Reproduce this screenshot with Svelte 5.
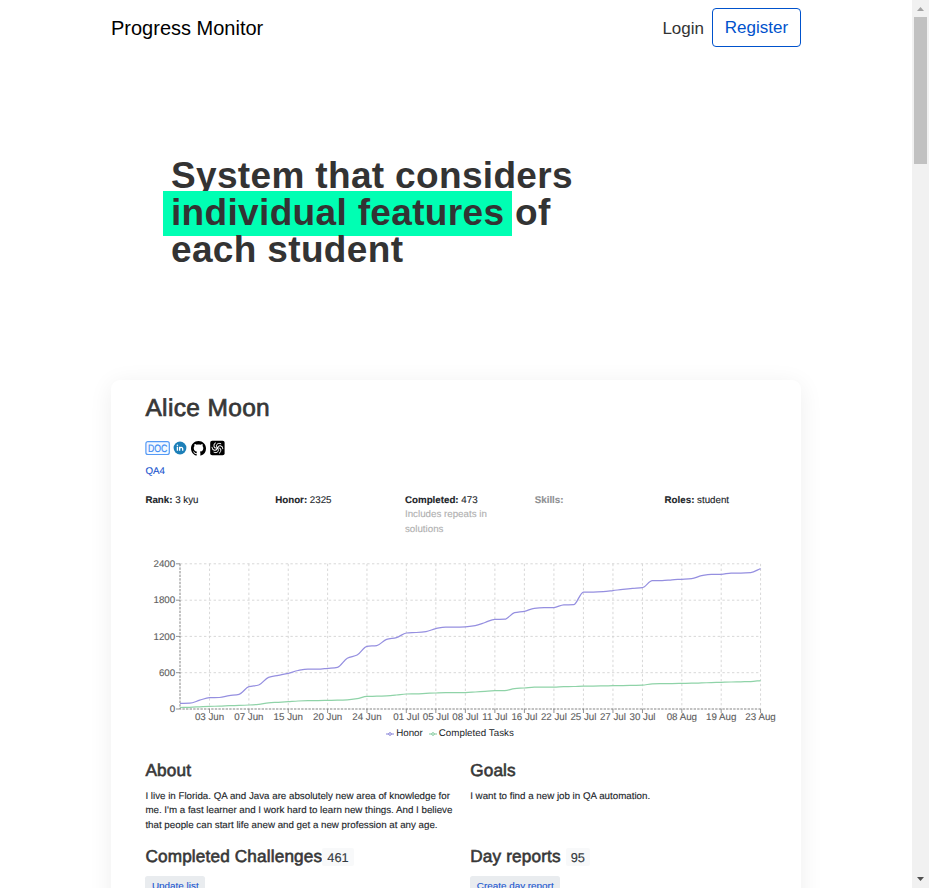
<script>
  const stats = [
    { label: 'Rank:', value: '3 kyu' },
    { label: 'Honor:', value: '2325' },
    { label: 'Completed:', value: '473', note: ['Includes repeats in', 'solutions'] },
    { label: 'Skills:', value: '', muted: true },
    { label: 'Roles:', value: 'student' }
  ];

  const x0 = 180;
  const step = 9.84;
  const yTicks = [
    [2400, 563.8], [1800, 600.2], [1200, 636.4], [600, 672.7], [0, 709]
  ];
  const xTicks = [
    [3, '03 Jun'], [7, '07 Jun'], [11, '15 Jun'], [15, '20 Jun'], [19, '24 Jun'],
    [23, '01 Jul'], [26, '05 Jul'], [29, '08 Jul'], [32, '11 Jul'], [35, '16 Jul'],
    [38, '22 Jul'], [41, '25 Jul'], [44, '27 Jul'], [47, '30 Jul'], [51, '08 Aug'],
    [55, '19 Aug'], [59, '23 Aug']
  ];
  const honor = [
    703.4, 703.2, 700.2, 697.6, 697.5, 695.7, 694.3, 686.7, 685, 677.3,
    675.3, 673.3, 670.5, 669.2, 669.2, 668.3, 667.3, 658.3, 655, 646.3,
    645.6, 639.3, 637.6, 633, 632.5, 631.6, 628.6, 627, 627, 626.8,
    625.6, 622.5, 619.3, 619.2, 612.7, 611.3, 608.3, 607.7, 607.6, 604.8,
    604.7, 592, 592, 591.7, 590.6, 589.3, 588.3, 587.6, 580.6, 580.6,
    579.8, 579.3, 578.7, 575.7, 574.3, 574.3, 573, 573, 572.6, 568.6
  ];
  const tasks = [
    707.5, 707.3, 706.8, 706.3, 706.2, 705.7, 705.4, 705, 704.3, 702.8,
    702.3, 701.7, 701, 700.7, 700.6, 700.4, 700.2, 699.8, 698.6, 696.4,
    696.2, 695.8, 695, 694, 693.8, 693.4, 693, 692.7, 692.6, 692.6,
    692, 691.3, 690.7, 690.6, 688.6, 688, 687, 687, 687, 686.6,
    686.5, 686, 686, 685.9, 685.7, 685.6, 685.4, 685.2, 683.8, 683.7,
    683.6, 683.4, 683.2, 682.9, 682.6, 682.3, 682, 681.8, 681.6, 680.6
  ];

  // Monotone cubic interpolation through evenly spaced points.
  function curve(ys) {
    const n = ys.length;
    const d = ys.slice(1).map((y, i) => y - ys[i]);
    const m = ys.map((_, i) => {
      if (i === 0) return d[0];
      if (i === n - 1) return d[n - 2];
      const a = d[i - 1];
      const b = d[i];
      if (a * b <= 0) return 0;
      return (2 * a * b) / (a + b);
    });
    let path = `M${x0},${ys[0]}`;
    for (let i = 0; i < n - 1; i++) {
      const x = x0 + i * step;
      path += `C${(x + step / 3).toFixed(2)},${(ys[i] + m[i] / 3).toFixed(2)} ${(x + (2 * step) / 3).toFixed(2)},${(ys[i + 1] - m[i + 1] / 3).toFixed(2)} ${(x + step).toFixed(2)},${ys[i + 1]}`;
    }
    return path;
  }
</script>

<div class="window">
  <div class="page">
    <header>
      <span class="brand">Progress Monitor</span>
      <nav>
        <span class="login">Login</span>
        <button class="register">Register</button>
      </nav>
    </header>

    <h1>System that considers<br /><span class="mark">individual features</span> of<br />each student</h1>

    <main class="card">
      <h2 class="name">Alice Moon</h2>
      <div class="icons">
        <svg width="25" height="16" viewBox="0 0 25 16">
          <rect x="0.9" y="1.7" width="23.4" height="12.8" rx="2" fill="#f4f9ff" stroke="#559af5" stroke-width="1.2" />
          <text x="3" y="12" font-size="10.6" textLength="19.4" lengthAdjust="spacingAndGlyphs" fill="#3f8df4" stroke="#3f8df4" stroke-width="0.2">DOC</text>
        </svg>
        <svg class="in" width="14" height="16" viewBox="0 0 14 16">
          <circle cx="7" cy="8" r="6.4" fill="#1c7fb8" />
          <path d="M4.4 6.8v4M6.6 10.8v-4M6.6 8.9c0-1.7 3.1-2.2 3.1 0v1.9" fill="none" stroke="#fff" stroke-width="1.3" />
          <circle cx="4.4" cy="5.2" r="0.8" fill="#fff" />
        </svg>
        <svg class="gh" width="15" height="15" viewBox="0 0 16 16">
          <path d="M8 0C3.58 0 0 3.58 0 8c0 3.54 2.29 6.53 5.47 7.59.4.07.55-.17.55-.38 0-.19-.01-.82-.01-1.49-2.01.37-2.53-.49-2.69-.94-.09-.23-.48-.94-.82-1.13-.28-.15-.68-.52-.01-.53.63-.01 1.08.58 1.23.82.72 1.21 1.87.87 2.33.66.07-.52.28-.87.51-1.07-1.78-.2-3.64-.89-3.64-3.95 0-.87.31-1.59.82-2.15-.08-.2-.36-1.02.08-2.12 0 0 .67-.21 2.2.82.64-.18 1.32-.27 2-.27s1.36.09 2 .27c1.53-1.04 2.2-.82 2.2-.82.44 1.1.16 1.92.08 2.12.51.56.82 1.27.82 2.15 0 3.07-1.87 3.75-3.65 3.95.29.25.54.73.54 1.48 0 1.07-.01 1.93-.01 2.2 0 .21.15.46.55.38A8.01 8.01 0 0 0 16 8c0-4.42-3.58-8-8-8z" />
        </svg>
        <svg class="cw" width="15" height="16" viewBox="0 0 15 16">
          <rect x="0.2" y="0.8" width="14.4" height="14.4" rx="2" />
          <g transform="translate(7.4 8)" fill="none" stroke="#fff" stroke-width="0.95" stroke-linecap="round">
            {#each [0, 60, 120, 180, 240, 300] as a}
              <path d="M0 0C-1.1 -1.2 -1.4 -2.6 -0.4 -3.7C0.5 -4.7 2 -4.9 3.4 -4.3" transform={`rotate(${a})`} />
            {/each}
          </g>
        </svg>
      </div>
      <div class="group">QA4</div>

      <div class="stats">
        {#each stats as s}
          <div class="stat" class:muted={s.muted}>
            <b>{s.label}</b> {s.value}
            {#if s.note}
              {#each s.note as line}<div class="note">{line}</div>{/each}
            {/if}
          </div>
        {/each}
      </div>

      <svg class="chart" width="640" height="184" viewBox="145 558 640 184">
        <g stroke="#d4d4d4" stroke-width="0.9" stroke-dasharray="2.4 2.4">
          {#each yTicks.slice(0, 4) as [, y]}<path d={`M180 ${y}H760.5`} />{/each}
          {#each xTicks as [i]}<path d={`M${x0 + i * step} 563.8V709`} />{/each}
        </g>
        <path d="M180 563.8V709H760.5" fill="none" stroke="#858585" stroke-width="1" stroke-dasharray="2.4 1.2" />
        <g stroke="#777" stroke-width="0.8">
          {#each yTicks as [, y]}<path d={`M176 ${y}H180`} />{/each}
          {#each xTicks as [i]}<path d={`M${x0 + i * step} 709V713`} />{/each}
        </g>
        <g font-size="9.75" fill="#606060" stroke="#606060" stroke-width="0.12">
          {#each yTicks as [v, y]}<text x="175.2" y={y + 3.2} text-anchor="end">{v}</text>{/each}
          {#each xTicks as [i, t]}<text x={x0 + i * step} y="720.2" text-anchor="middle">{t}</text>{/each}
        </g>
        <path d={curve(tasks)} fill="none" stroke="#8fd3a8" stroke-width="1.25" />
        <path d={curve(honor)} fill="none" stroke="#958fe0" stroke-width="1.25" />
        <g fill="#fff" stroke-width="1">
          <path d="M386 734H394" stroke="#8884d8" /><circle cx="390" cy="734" r="1.3" stroke="#8884d8" />
          <path d="M429 734H437" stroke="#82ca9d" /><circle cx="433" cy="734" r="1.3" stroke="#82ca9d" />
        </g>
        <g font-size="9.75" fill="#212529">
          <text x="396.2" y="736.4">Honor</text>
          <text x="438.8" y="736.4" textLength="75">Completed Tasks</text>
        </g>
      </svg>

      <div class="columns first">
        <section>
          <h3>About</h3>
          <p>I live in Florida. QA and Java are absolutely new area of knowledge for<br />me. I'm a fast learner and I work hard to learn new things. And I believe<br />that people can start life anew and get a new profession at any age.</p>
        </section>
        <section>
          <h3>Goals</h3>
          <p>I want to find a new job in QA automation.</p>
        </section>
      </div>
      <div class="columns second">
        <section>
          <h3>Completed Challenges<span class="count">461</span></h3>
          <button class="action">Update list</button>
        </section>
        <section>
          <h3>Day reports<span class="count spaced">95</span></h3>
          <button class="action">Create day report</button>
        </section>
      </div>
    </main>
  </div>

  <div class="scrollbar">
    <svg width="17" height="17" viewBox="0 0 17 17"><path d="M5 11L8.5 7L12 11Z" fill="#a3a3a3" /></svg>
    <div class="thumb"></div>
    <svg width="17" height="17" viewBox="0 0 17 17"><path d="M5 6L8.5 10L12 6Z" fill="#505050" /></svg>
  </div>
</div>

<style>
  :global(body) {
    margin: 0;
    background: #fff;
    overflow: hidden;
  }
  .window {
    display: flex;
    width: 929px;
    height: 888px;
    overflow: hidden;
    font-family: 'Liberation Sans', Arial, sans-serif;
  }
  .page {
    width: 690px;
    height: 888px;
    padding: 0 111px;
    overflow: hidden;
    flex: none;
  }
  header {
    display: flex;
    justify-content: space-between;
    padding-top: 8px;
    height: 39px;
    align-items: center;
  }
  .brand {
    padding-top: 2px;
    font-size: 20px;
    color: #000;
  }
  nav {
    display: flex;
    align-items: center;
    gap: 8px;
    font-size: 17px;
    color: #333;
  }
  .login {
    padding-top: 3px;
  }
  .register {
    box-sizing: border-box;
    width: 89px;
    height: 39px;
    padding: 0;
    border: 1px solid #0052cc;
    border-radius: 4px;
    background: #fff;
    color: #0052cc;
    font: 17px 'Liberation Sans', Arial, sans-serif;
  }
  h1 {
    margin: 110px 0 0 60px;
    height: 223px;
    font-size: 37px;
    line-height: 37px;
    letter-spacing: 0.34px;
    color: #333;
    white-space: nowrap;
  }
  .mark {
    padding: 1px 8px 3px;
    margin: 0 -8px;
    background: #00ffb3;
  }
  .card {
    box-sizing: border-box;
    height: 620px;
    padding: 15px 0 0 34.4px;
    border-radius: 9px;
    background: #fff;
    box-shadow: 0 4px 24px rgba(0, 0, 0, 0.07);
    font-size: 9.75px;
    line-height: 14.2px;
    color: #212529;
    text-rendering: geometricPrecision;
  }
  .name {
    margin: 0;
    font-size: 24.5px;
    font-weight: 400;
    line-height: 28px;
    letter-spacing: 0.35px;
    color: #373737;
    -webkit-text-stroke: 0.7px #373737;
  }
  .icons {
    display: flex;
    align-items: center;
    height: 16px;
    margin-top: 17px;
  }
  .in {
    margin-left: 2.6px;
  }
  .gh {
    margin-left: 4px;
  }
  .cw {
    margin-left: 4px;
  }
  .group {
    margin-top: 9px;
    color: #1a56cf;
    -webkit-text-stroke: 0.12px;
  }
  .stats {
    display: flex;
    height: 43px;
    margin-top: 15px;
    -webkit-text-stroke: 0.12px;
  }
  .stat {
    width: 129.8px;
  }
  .stat.muted {
    color: #8f9193;
  }
  .note {
    color: #b0b0b0;
  }
  .chart {
    display: block;
    margin: 21px 0 0 -0.4px;
  }
  .columns {
    display: flex;
  }
  .columns section {
    width: 324.8px;
    white-space: nowrap;
  }
  .first {
    margin-top: 17px;
    height: 86px;
  }
  h3 {
    display: flex;
    align-items: center;
    margin: 0;
    height: 22px;
    font-size: 17.2px;
    font-weight: 400;
    letter-spacing: 0.15px;
    color: #373737;
    -webkit-text-stroke: 0.6px #373737;
  }
  p {
    margin: 9px 0 0;
    -webkit-text-stroke: 0.12px;
  }
  .count {
    margin-top: 2px;
    height: 18.5px;
    padding: 0 5px;
    border-radius: 2px;
    background: #f8f9fa;
    font-size: 12.8px;
    line-height: 19px;
    letter-spacing: 0;
    color: #343a40;
    -webkit-text-stroke: 0.15px #343a40;
  }
  .spaced {
    margin-left: 5px;
  }
  .action {
    display: block;
    margin-top: 9px;
    height: 24px;
    padding: 0 6.6px 4px;
    border: 0;
    border-radius: 2.5px;
    background: #e9ecef;
    color: #1a56cf;
    font: 9.9px/20px 'Liberation Sans', Arial, sans-serif;
    -webkit-text-stroke: 0.12px;
  }
  .scrollbar {
    display: flex;
    flex-direction: column;
    width: 17px;
    height: 888px;
    background: #f1f1f1;
  }
  .scrollbar svg {
    display: block;
    flex: none;
  }
  .scrollbar svg:last-child {
    margin-top: auto;
  }
  .thumb {
    width: 13px;
    height: 147px;
    margin: 0 2px;
    background: #c1c1c1;
  }
</style>
